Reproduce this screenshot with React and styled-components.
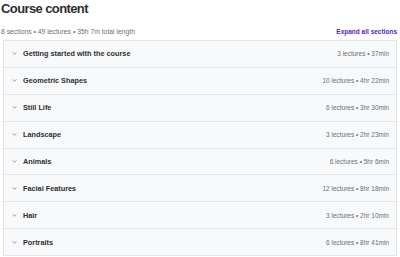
import React from "react";
import styled, { createGlobalStyle } from "styled-components";

const Global = createGlobalStyle`
  html, body { margin: 0; padding: 0; background: #fff; }
  body { font-family: "Liberation Sans", Arial, sans-serif; color: #2d2f31; }
`;

const Page = styled.div`
  width: 400px;
  padding: 0 3px 0 1px;
  box-sizing: border-box;
`;

const Title = styled.h2`
  margin: 0;
  font-size: 13px;
  line-height: 18px;
  font-weight: 700;
  letter-spacing: -0.6px;
  color: #2d2f31;
`;

const Meta = styled.div`
  display: flex;
  justify-content: space-between;
  align-items: center;
  margin-top: 7px;
  height: 12px;
  margin-bottom: 3px;
`;

const Summary = styled.span`
  font-size: 6.8px;
  color: #6a6f73;
`;

const ExpandLink = styled.button`
  border: none;
  background: none;
  padding: 0;
  font-family: inherit;
  font-size: 6.5px;
  font-weight: 700;
  color: #5624d0;
  cursor: pointer;
`;

const Sections = styled.div`
  margin-left: 2px;
  border: 1px solid #e2e6e9;
  border-bottom: none;
`;

const Row = styled.div`
  display: flex;
  align-items: center;
  height: 25.9px;
  padding: 0 7px 0 8px;
  background: #f7f9fa;
  border-bottom: 1px solid #e2e6e9;
`;

const Chevron = styled.svg`
  width: 5px;
  height: 5px;
  flex: none;
  margin-right: 6px;
`;

const SectionTitle = styled.span`
  flex: 1;
  font-size: 7.3px;
  font-weight: 700;
  color: #2d2f31;
`;

const SectionInfo = styled.span`
  font-size: 6.5px;
  color: #6a6f73;
`;

const sections = [
  ["Getting started with the course", "3 lectures • 37min"],
  ["Geometric Shapes", "10 lectures • 4hr 22min"],
  ["Still Life", "6 lectures • 3hr 30min"],
  ["Landscape", "3 lectures • 2hr 23min"],
  ["Animals", "6 lectures • 5hr 6min"],
  ["Facial Features", "12 lectures • 8hr 18min"],
  ["Hair", "3 lectures • 2hr 10min"],
  ["Portraits", "6 lectures • 8hr 41min"],
];

export default function App() {
  return (
    <Page>
      <Global />
      <Title>Course content</Title>
      <Meta>
        <Summary>8 sections • 49 lectures • 35h 7m total length</Summary>
        <ExpandLink>Expand all sections</ExpandLink>
      </Meta>
      <Sections>
        {sections.map(([t, info]) => (
          <Row key={t}>
            <Chevron viewBox="0 0 10 10">
              <path d="M2 3.5 L5 6.5 L8 3.5" fill="none" stroke="#6a6f73" strokeWidth="1.4" strokeLinecap="round" strokeLinejoin="round" />
            </Chevron>
            <SectionTitle>{t}</SectionTitle>
            <SectionInfo>{info}</SectionInfo>
          </Row>
        ))}
      </Sections>
    </Page>
  );
}
